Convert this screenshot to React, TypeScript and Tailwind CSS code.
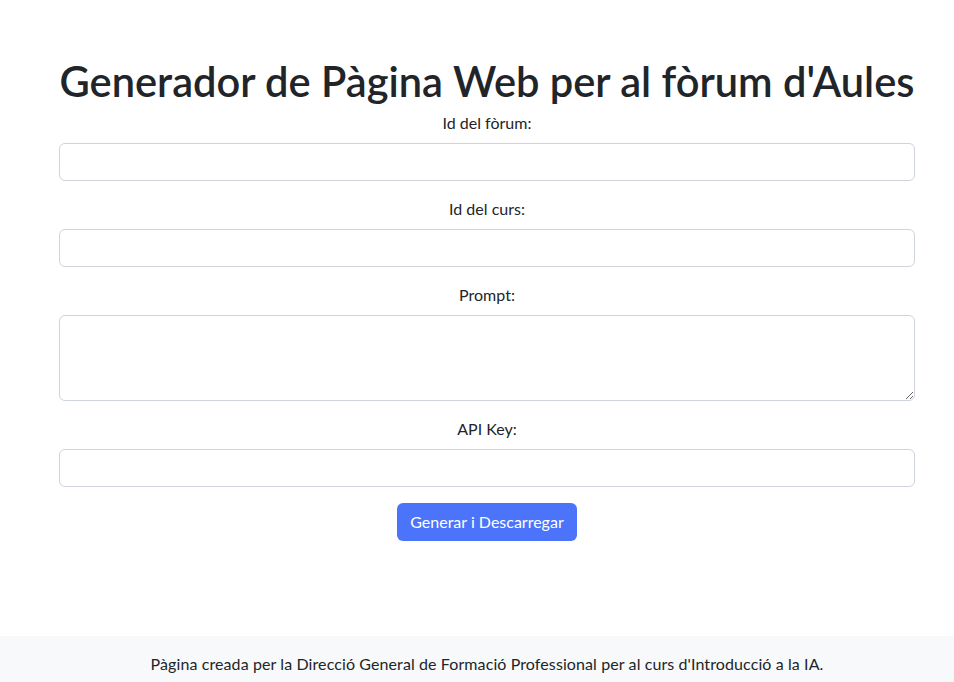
export default function App() {
  return (
    <div className="min-h-[682px] bg-white font-['Lato',sans-serif] text-[#212529] flex flex-col">
      <main className="pl-[59px] pr-[39px] pt-[57px]">
        <h1 className="text-center text-[41.6px] font-semibold leading-[48px] mb-[6px] whitespace-nowrap">
          Generador de Pàgina Web per al fòrum d'Aules
        </h1>
        <form className="flex flex-col" onSubmit={(e) => e.preventDefault()}>
          <Field label="Id del fòrum:" />
          <Field label="Id del curs:" />
          <div className="mb-4 flex flex-col">
            <label className="text-center text-base leading-6 mb-2">Prompt:</label>
            <textarea
              rows={3}
              className="h-[86px] w-full rounded-[6px] border border-[#ced4da] px-3 py-1.5 leading-6 outline-none"
            />
          </div>
          <Field label="API Key:" />
          <div className="flex justify-center">
            <button
              type="submit"
              className="h-[38px] w-[180px] rounded-[6px] bg-[#4b74fb] text-white text-base leading-6"
            >
              Generar i Descarregar
            </button>
          </div>
        </form>
      </main>
      <footer className="mt-[95px] bg-[#f8f9fa] pl-[59px] pr-[39px] pt-4 pb-4 text-center text-base leading-6 tracking-[0.1px]">
        Pàgina creada per la Direcció General de Formació Professional per al curs d'Introducció a la IA.
      </footer>
    </div>
  );
}

function Field({ label }: { label: string }) {
  return (
    <div className="mb-4 flex flex-col">
      <label className="text-center text-base leading-6 mb-2">{label}</label>
      <input
        type="text"
        className="h-[38px] w-full rounded-[6px] border border-[#ced4da] px-3 outline-none"
      />
    </div>
  );
}
